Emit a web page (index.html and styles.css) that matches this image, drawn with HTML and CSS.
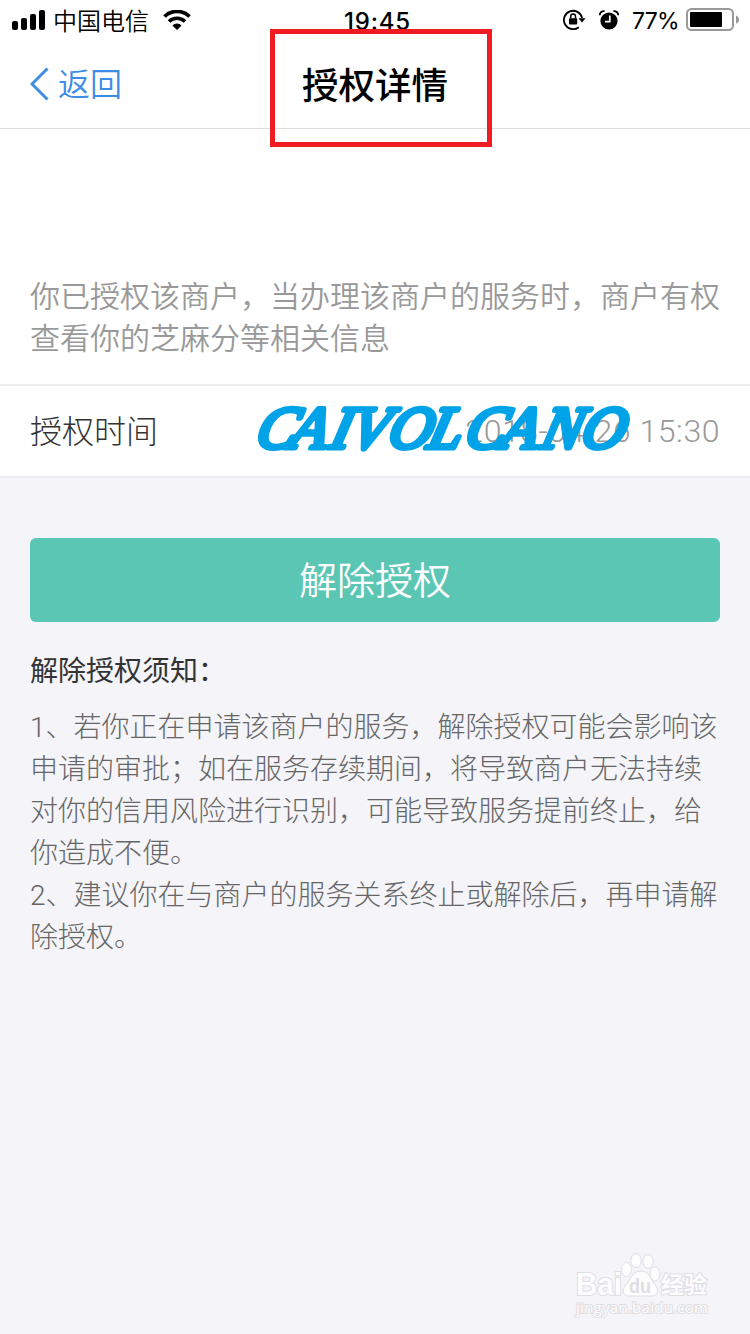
FILE: index.html
```html
<!DOCTYPE html>
<html lang="zh-CN">
<head>
    <meta charset="UTF-8">
    <meta name="viewport" content="width=device-width, initial-scale=1.0">
    <title>授权详情</title>
    <link rel="stylesheet" href="styles.css">
</head>
<body>
    <div class="page">
        <div class="status-bar">
            <div class="status-left">
                <svg class="signal" width="34" height="20" viewBox="0 0 34 20">
                    <rect x="0" y="11" width="6" height="9" rx="2"/>
                    <rect x="9" y="8" width="6" height="12" rx="2"/>
                    <rect x="18" y="4" width="6" height="16" rx="2"/>
                    <rect x="27" y="0" width="6" height="20" rx="2"/>
                </svg>
                <span class="carrier">中国电信</span>
                <svg class="wifi" width="28" height="20" viewBox="0 0 28 20">
                    <path d="M1.5 6.500A18 18 0 0 1 26.500 6.500" fill="none" stroke="#000" stroke-width="3.8"/>
                    <path d="M6 11.500A11.500 11.500 0 0 1 22 11.500" fill="none" stroke="#000" stroke-width="3.6"/>
                    <path d="M9.4 15.400A6.800 6.800 0 0 1 18.600 15.400L14 19.900Z"/>
                </svg>
            </div>
            <span class="time">19:45</span>
            <div class="status-right">
                <svg class="lock" width="23" height="22" viewBox="0 0 23 22">
                    <path d="M15.8 18.2A9.2 9.2 0 1 1 19.1 9" fill="none" stroke="#000" stroke-width="1.8"/>
                    <path d="M15.4 9.2H22.6L19 13.6Z"/>
                    <rect x="6" y="9.2" width="8.2" height="6.4" rx="0.8"/>
                    <path d="M7.7 9.5V7.6A2.4 2.6 0 0 1 12.5 7.6V9.5" fill="none" stroke="#000" stroke-width="1.5"/>
                </svg>
                <svg class="alarm" width="20" height="20" viewBox="0 0 20 20">
                    <circle cx="10" cy="11" r="8.6"/>
                    <path d="M0.8 5.2A4 4 0 0 1 5.6 1.2M14.4 1.2A4 4 0 0 1 19.2 5.2" fill="none" stroke="#000" stroke-width="1.8"/>
                    <path d="M10.8 5.6V11.6H6" fill="none" stroke="#fff" stroke-width="1.7"/>
                </svg>
                <span class="percent">77%</span>
                <svg class="battery" width="53" height="24" viewBox="0 0 53 24">
                    <rect x="1" y="1" width="46" height="21" rx="4.5" fill="none" stroke="#999" stroke-width="2"/>
                    <rect x="4" y="4" width="32" height="15" rx="1"/>
                    <path d="M50 7.5Q53 8.5 53 11.5T50 15.5Z" fill="#999"/>
                </svg>
            </div>
        </div>

        <div class="nav-bar">
            <a class="back">
                <svg width="20" height="34" viewBox="0 0 20 34">
                    <path d="M17.5 1.5L2 17L17.5 32.5" fill="none" stroke="#3d8de6" stroke-width="3"/>
                </svg>
                <span class="back-text">返回</span>
            </a>
            <h1 class="title">授权详情</h1>
            <div class="highlight"></div>
        </div>

        <p class="description">你已授权该商户，当办理该商户的服务时，商户有权<br>查看你的芝麻分等相关信息</p>

        <div class="row">
            <span class="row-label">授权时间</span>
            <span class="row-value">2018-04-26 15:30</span>
            <svg class="signature" width="390" height="70" viewBox="0 0 390 70">
                <text transform="translate(0 54) skewX(-14)" x="9 43 83 103 141 181 218 254 294 334">CAIVOLCANO</text>
            </svg>
        </div>

        <button class="cancel-button">解除授权</button>

        <div class="notice">
            <h2 class="notice-title">解除授权须知：</h2>
            <p>1、若你正在申请该商户的服务，解除授权可能会影响该<br>申请的审批；如在服务存续期间，将导致商户无法持续<br>对你的信用风险进行识别，可能导致服务提前终止，给<br>你造成不便。</p>
            <p>2、建议你在与商户的服务关系终止或解除后，再申请解<br>除授权。</p>
        </div>

        <svg class="watermark" width="150" height="76" viewBox="0 0 150 76">
            <text class="wm-baidu" x="6" y="48" textLength="46" lengthAdjust="spacingAndGlyphs">Bai</text>
            <g class="wm-paw">
                <ellipse cx="56.500" cy="22.500" rx="5" ry="7"/>
                <ellipse cx="66" cy="13.500" rx="5.200" ry="7.200"/>
                <ellipse cx="78" cy="14.500" rx="5.200" ry="7"/>
                <ellipse cx="85" cy="27" rx="5" ry="7"/>
                <path d="M55 39C60 34 62 24 71 24S81 34 86 39C90 45 86 50 80 49H61C54 50 51 45 55 39Z"/>
            </g>
            <text class="wm-du" x="59" y="46" textLength="22" lengthAdjust="spacingAndGlyphs">du</text>
            <text class="wm-cn" x="91" y="46" textLength="46">经验</text>
            <text class="wm-url" x="6" y="66" textLength="132">jingyan.baidu.com</text>
        </svg>
    </div>
</body>
</html>
```
FILE: styles.css
```css
* {
    box-sizing: border-box;
}

body {
    margin: 0;
    background-color: #f4f4f9;
    font-family: "Noto Sans CJK SC", sans-serif;
    font-weight: 350;
}

.page {
    position: relative;
    width: 750px;
    height: 1334px;
    overflow: hidden;
}

.status-bar {
    display: grid;
    grid-template-columns: 1fr auto 1fr;
    align-items: center;
    height: 40px;
    padding: 0 11px 0 12px;
    background-color: #fff;
    color: #000;
}

.status-left,
.status-right {
    display: flex;
    align-items: center;
}

.status-right {
    justify-content: flex-end;
}

.carrier {
    margin: 0 14px 0 7px;
    font-size: 24px;
    line-height: 40px;
}

.time {
    padding: 2px 0 0 4px;
    font-family: Inter, sans-serif;
    font-size: 24px;
    font-weight: 500;
    letter-spacing: 0.8px;
}

.alarm {
    margin: 0 13px;
}

.percent {
    margin-right: 7px;
    padding-top: 2px;
    font-family: Inter, sans-serif;
    font-size: 23px;
    font-weight: 400;
    letter-spacing: -0.7px;
}

.nav-bar {
    position: relative;
    display: grid;
    grid-template-columns: 1fr auto 1fr;
    align-items: center;
    height: 89px;
    padding: 0 30px;
    border-bottom: 1px solid #dedede;
    background-color: #fff;
}

.back {
    display: flex;
    align-items: center;
    gap: 8px;
    color: #3d8de6;
    font-size: 32px;
    line-height: 48px;
}

.back-text {
    padding-bottom: 4px;
}

.title {
    margin: 0;
    color: #000;
    font-size: 36.5px;
    font-weight: 500;
    line-height: 54px;
}

.highlight {
    position: absolute;
    top: -11px;
    left: 270px;
    width: 222px;
    height: 118px;
    border: 5px solid #f01b23;
}

.description {
    margin: 0;
    padding: 144px 30px 27px;
    border-bottom: 2px solid #ededed;
    background-color: #fff;
    color: #999;
    font-size: 30px;
    line-height: 42px;
    white-space: nowrap;
}

.row {
    position: relative;
    display: flex;
    justify-content: space-between;
    align-items: center;
    height: 92px;
    padding: 0 30px;
    border-bottom: 2px solid #ededed;
    background-color: #fff;
    font-size: 32px;
}

.row-label {
    padding-bottom: 4px;
    color: #333;
    font-weight: 300;
}

.row-value {
    color: #999;
    font-family: Roboto, sans-serif;
    font-weight: 300;
    letter-spacing: 0.55px;
}

.signature {
    position: absolute;
    top: 8px;
    left: 245px;
    overflow: visible;
}

.signature text {
    fill: #00a2e8;
    stroke: #00a2e8;
    stroke-width: 5px;
    stroke-linejoin: round;
    font-family: "Liberation Serif", serif;
    font-size: 60px;
    font-style: italic;
    font-weight: 400;
}

.cancel-button {
    display: block;
    width: 690px;
    height: 84px;
    margin: 60px 30px 29px;
    padding: 0 0 5px;
    border: 0;
    border-radius: 6px;
    background-color: #5bc6b4;
    color: #fff;
    font-family: inherit;
    font-size: 38px;
    font-weight: 350;
}

.notice {
    padding: 0 30px;
    color: #666;
    font-family: Roboto, "Noto Sans CJK SC", sans-serif;
    font-size: 28px;
    font-weight: 300;
    line-height: 42px;
    white-space: nowrap;
}

.notice p {
    margin: 0;
}

.notice-title {
    margin: 0 0 14px;
    color: #333;
    font-size: 28px;
    font-weight: 400;
}

.watermark {
    position: absolute;
    top: 1247px;
    left: 570px;
    fill: #fdfdfe;
    stroke: #dedee3;
    stroke-width: 1px;
}

.watermark text {
    paint-order: stroke;
    stroke-width: 2px;
    font-family: "Liberation Sans", "Noto Sans CJK SC", sans-serif;
    font-weight: 700;
}

.watermark .wm-baidu {
    font-size: 31px;
}

.watermark .wm-du {
    fill: #dedee3;
    stroke: none;
    font-size: 20px;
}

.watermark .wm-cn {
    font-size: 23px;
}

.watermark .wm-url {
    font-family: "Open Sans", sans-serif;
    font-size: 15px;
    font-weight: 400;
}
```
